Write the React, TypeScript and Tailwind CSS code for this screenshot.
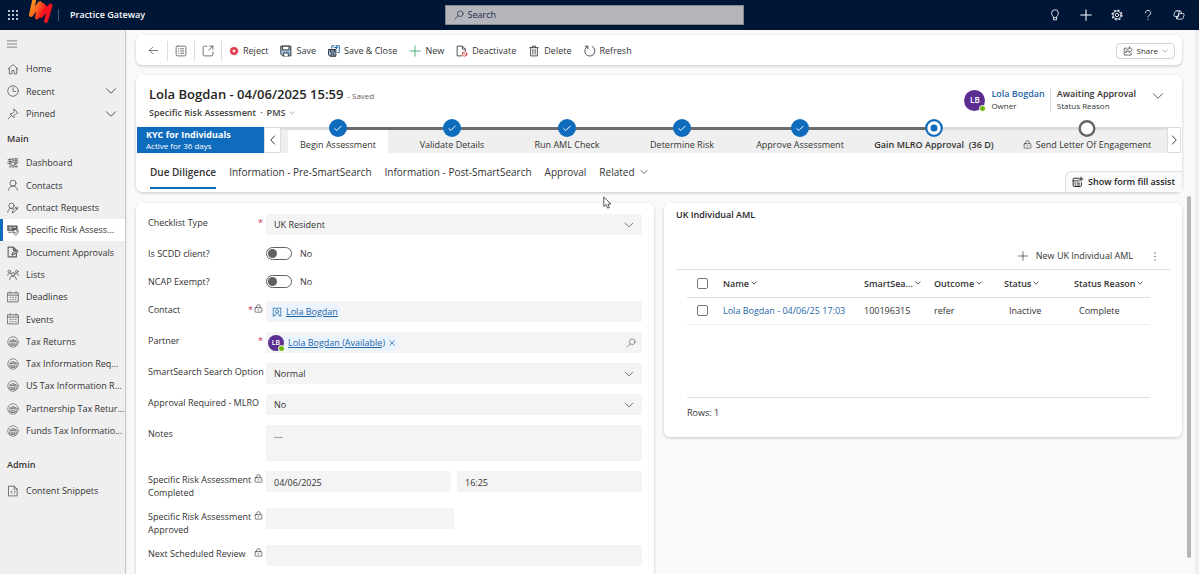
import type { ReactNode } from 'react';
import { clsx } from 'clsx';

type IconProps = { className?: string; children?: ReactNode; sw?: number };

/* 16 unit grid, thin strokes */
function Ico({ className = 'size-3', children, sw = 1.1 }: IconProps) {
  return (
    <svg
      viewBox="0 0 16 16"
      fill="none"
      stroke="currentColor"
      strokeWidth={sw}
      strokeLinecap="round"
      strokeLinejoin="round"
      className={clsx('shrink-0', className)}
      aria-hidden="true"
    >
      {children}
    </svg>
  );
}

const Chevron = ({ className, sw }: { className?: string; sw?: number }) => (
  <Ico className={className} sw={sw}><path d="M2 5l6 6 6-6" /></Ico>
);

const Lock = ({ className = 'size-[10px]' }: { className?: string }) => (
  <Ico className={className}>
    <rect x="2" y="6.5" width="12" height="8" rx="1" />
    <path d="M5 6.5V4a3 3 0 0 1 6 0v2.5M7 10.5h2" />
  </Ico>
);

const PersonRound = () => (
  <Ico sw={0.9}>
    <circle cx="8" cy="8" r="7" />
    <circle cx="8" cy="6" r="1.6" />
    <circle cx="4.8" cy="7" r="1.1" />
    <circle cx="11.2" cy="7" r="1.1" />
    <path d="M5.6 12V9.6h4.8V12zM3.4 11V9.4M12.6 11V9.4M4 12h8" />
  </Ico>
);

const Calendar = () => (
  <Ico>
    <path d="M1 2.5h14v12H1zM1 5.5h14M4 1v1.5M12 1v1.5" />
    <path d="M4 8.5h1M7.5 8.5h1M11 8.5h1M4 11.5h1M7.5 11.5h1M11 11.5h1" />
  </Ico>
);

const topNav = [
  { label: 'Home', icon: <Ico><path d="M1.5 8L8 2l6.5 6M3 7v7.500h3.500V10h3v4.500H13V7" /></Ico> },
  { label: 'Recent', more: true, icon: <Ico><circle cx="8" cy="8" r="7" /><path d="M8 3.500V8.500h3.500" /></Ico> },
  {
    label: 'Pinned',
    more: true,
    icon: <Ico><path d="M9.500 1.500l5 5-1.500.8-1 .2-2.500 2.500-.3 3L4 7.800l3-.3L9.500 5l-.3-1.500zM6 10l-4.500 4.500" /></Ico>,
  },
];

const mainNav = [
  {
    label: 'Dashboard',
    icon: (
      <Ico>
        <circle cx="8" cy="9" r="2.500" />
        <path d="M1.500 3.500h6M1.500 6h4.500M1 8.500h3.500M9 2.500h5.500M9 5h5.500M11.500 7.500h3M3 13h3M10 13h4M4 2v9M12 2v11M8 2v4M8 12v2.500" />
      </Ico>
    ),
  },
  { label: 'Contacts', icon: <Ico><circle cx="8" cy="5.500" r="4" /><path d="M2 15c.3-3.500 2.500-5.500 6-5.500s5.700 2 6 5.500" /></Ico> },
  {
    label: 'Contact Requests',
    icon: (
      <Ico>
        <circle cx="6" cy="5" r="3.500" />
        <path d="M1 13.500c.2-3 2-5 5-5 1 0 2 .3 2.500.7M7 14l1-2.800 5-5 1.800 1.800-5 5zM11.500 7.500l2 2" />
      </Ico>
    ),
  },
  {
    label: 'Specific Risk Assess...',
    active: true,
    icon: (
      <Ico>
        <path d="M.8 2.500h12.700v6H.8z" fill="currentColor" />
        <path d="M3 4.300h2.500M8 4.300h3.500M3 6.500h3" stroke="#fff" />
        <path d="M2 11h5" />
        <path d="M8 8.500c1.500 0 2.200-.4 3.500-1.200 1.300.8 2 1.200 3.500 1.200 0 3.200-1 5-3.500 6.200C9 13.500 8 11.700 8 8.500zM9.800 11l1.200 1.200 2.200-2.200" fill="#fff" />
      </Ico>
    ),
  },
  {
    label: 'Document Approvals',
    icon: (
      <Ico sw={1.4}>
        <path d="M12.500 10v4.500h-11v-13h7l4 4M8.500 1.500v4h4M6.500 12l1-2.800L13 5.500 14.500 7 9 11.500z" />
      </Ico>
    ),
  },
  {
    label: 'Lists',
    icon: (
      <Ico>
        <circle cx="8" cy="7" r="2.300" />
        <circle cx="3" cy="3.500" r="1.700" />
        <circle cx="13" cy="3.500" r="1.700" />
        <path d="M3.500 14c.3-2.800 2-4.500 4.500-4.500s4.200 1.700 4.500 4.500M1 8.500c.2-2 1.500-2.800 3.500-2.500M15 8.500c-.2-2-1.500-2.800-3.500-2.500" />
      </Ico>
    ),
  },
  { label: 'Deadlines', icon: <Calendar /> },
  { label: 'Events', icon: <Calendar /> },
  { label: 'Tax Returns', icon: <PersonRound /> },
  { label: 'Tax Information Req...', icon: <PersonRound /> },
  { label: 'US Tax Information R...', icon: <PersonRound /> },
  { label: 'Partnership Tax Retur...', icon: <PersonRound /> },
  { label: 'Funds Tax Informatio...', icon: <PersonRound /> },
];

const adminNav = [
  {
    label: 'Content Snippets',
    icon: <Ico><path d="M2.500 1.500h7l4 4v9h-11zM9.500 1.500v4h4M6.500 8L5 9.500 6.500 11M9.500 8L11 9.500 9.500 11" /></Ico>,
  },
];

type NavEntry = { label: string; icon: ReactNode; more?: boolean; active?: boolean };

function NavItem({ label, icon, more, active }: NavEntry) {
  return (
    <a
      href="#"
      className={clsx(
        'flex items-center border-l-3 pl-1',
        active ? 'border-[#0f6cbd] bg-white' : 'border-transparent'
      )}
    >
      <span className="text-[#5a5a5a]">{icon}</span>
      <span className="ml-[7px] flex-1 whitespace-nowrap">{label}</span>
      {more && <Chevron className="mr-2 size-3" />}
    </a>
  );
}

function Sidebar() {
  return (
    <nav className="w-[126px] shrink-0 border-r border-[#c8c8c8] bg-[#efefef] text-[9px] text-[#333] shadow-sm">
      <button aria-label="Toggle navigation" className="flex h-7 items-center pl-[7px] text-[#555]">
        <Ico className="size-[10px]"><path d="M0 3h16M0 8h16M0 13h16" /></Ico>
      </button>
      <div className="grid h-[67px] auto-rows-fr grid-cols-1">
        {topNav.map((n) => <NavItem key={n.label} {...n} />)}
      </div>
      <h2 className="flex h-[27px] items-center pl-[7px] font-semibold">Main</h2>
      <div className="grid h-[290px] auto-rows-fr grid-cols-1">
        {mainNav.map((n) => <NavItem key={n.label} {...n} />)}
      </div>
      <h2 className="flex h-[37px] items-center pt-2 pl-[7px] font-semibold">Admin</h2>
      <div className="grid h-[23px] grid-cols-1">
        {adminNav.map((n) => <NavItem key={n.label} {...n} />)}
      </div>
    </nav>
  );
}

function TopBar() {
  return (
    <header className="flex h-[30px] shrink-0 items-center bg-[#001637] text-white">
      <button aria-label="App launcher" className="ml-[7px]">
        <svg viewBox="0 0 12 12" className="size-3" fill="currentColor">
          {[2, 6, 10].map((y) => [2, 6, 10].map((x) => <circle key={`${x}-${y}`} cx={x} cy={y} r="1" />))}
        </svg>
      </button>
      <svg viewBox="0 0 26 30" className="ml-2 h-[30px] w-[26px]" fill="none" strokeWidth="4" strokeLinecap="round" strokeLinejoin="round">
        <defs>
          <linearGradient id="flame" x1="2" y1="4" x2="22" y2="14" gradientUnits="userSpaceOnUse">
            <stop offset="0" stopColor="#ffa51e" />
            <stop offset="0.45" stopColor="#fb5a1e" />
            <stop offset="0.75" stopColor="#f5111f" />
          </linearGradient>
        </defs>
        <path d="M7.500 -1L4 15L13 3L10 17.500L18 7" stroke="url(#flame)" />
        <path d="M16 5L14 16L23.500 5.500L19 21" stroke="url(#flame)" />
      </svg>
      <span className="ml-[5px] h-3 w-px bg-[#44546e]" />
      <span className="ml-[11px] text-[9px] font-semibold">Practice Gateway</span>

      <label className="mx-auto flex h-5 w-[299px] items-center gap-1 border border-[#85878c] bg-[#b4b6bb] pl-2 text-[#1d2c4a]">
        <Ico className="size-[10px]"><circle cx="10" cy="6" r="4.500" /><path d="M6.500 9.500L1.500 14.500" /></Ico>
        <input aria-label="Search" placeholder="Search" className="w-full bg-transparent text-[9px] outline-none placeholder:text-[#1d2c4a]" />
      </label>

      <div className="mr-[14px] flex items-center gap-[19px] pl-[6px]">
        <button aria-label="Tips">
          <Ico><path d="M6 11c0-1.500-2.500-2.500-2.500-5.500a4.500 4.500 0 0 1 9 0C12.500 8.500 10 9.500 10 11zM6 11v3.500h4V11" /></Ico>
        </button>
        <button aria-label="Add"><Ico sw={1.4}><path d="M8 1v14M1 8h14" /></Ico></button>
        <button aria-label="Settings">
          <Ico>
            <circle cx="8" cy="8" r="2.300" />
            <circle cx="8" cy="8" r="5.200" />
            <circle cx="8" cy="8" r="6.600" strokeWidth="1.600" strokeDasharray="2.600 2.580" strokeLinecap="butt" />
          </Ico>
        </button>
        <button aria-label="Help">
          <Ico><path d="M4.500 5a3.500 3.500 0 1 1 5.500 3C8.500 9 8 9.500 8 11M8 14v.3" /></Ico>
        </button>
        <button aria-label="Copilot">
          <Ico>
            <path d="M5.500 2.500h4c1 0 1.300.7 1.600 1.800l.4 1.700h1.500c2 0 2 1.500 1.500 3l-.8 2.500c-.4 1.300-1 2-2.200 2h-5c-1 0-1.400-.7-1.600-1.500L4.500 10H3C1 10 1 8.500 1.500 7l.8-2.500c.5-1.300 1.200-2 3.200-2z" />
            <path d="M8.500 3L6 11.500c-.3 1-.8 1.500-1.500 1.500M11.500 6H9.500c-1 0-1.300.5-1.600 1.500L7 10H4.500" />
          </Ico>
        </button>
      </div>
    </header>
  );
}

const Floppy = () => (
  <Ico sw={1.3}>
    <path d="M1.500 1.500h13v13h-11l-2-2z" fill="#9cc3e6" />
    <path d="M4 1.500h8v5H4zM5 14.500v-4h6v4" fill="#fff" />
  </Ico>
);

const commands = [
  {
    label: 'Reject',
    icon: (
      <Ico className="size-[10px]">
        <circle cx="8" cy="8" r="6" fill="#e03a48" stroke="#e03a48" />
        <path d="M6.500 6.500l3 3M9.500 6.500l-3 3" stroke="#fff" strokeWidth="1.800" />
      </Ico>
    ),
  },
  { label: 'Save', icon: <Floppy /> },
  {
    label: 'Save & Close',
    icon: (
      <Ico sw={1.3}>
        <path d="M1 6h9.500v9H2.500L1 13.500z" fill="#9cc3e6" />
        <path d="M3.500 6.500h5v3h-5zM4 15v-3h4v3" />
        <path d="M5 4V1h3M11 1h4v9h-2M8 3.500h4.500M10.500 1.500l2 2-2 2" stroke="#22639c" />
      </Ico>
    ),
  },
  { label: 'New', icon: <Ico><path d="M8 1v14M1 8h14" stroke="#33a457" /></Ico> },
  {
    label: 'Deactivate',
    icon: (
      <Ico>
        <path d="M7.500 14.500h-6v-13h7l4 4v2M8.500 1.500v4h4" />
        <circle cx="11.500" cy="12" r="3" stroke="#d13438" />
        <path d="M9.500 10l4 4" stroke="#d13438" />
      </Ico>
    ),
  },
  {
    label: 'Delete',
    icon: <Ico><path d="M2.500 3.500h11M6 3.500v-2h4v2M3.500 3.500v11h9v-11M6.500 6v6M9.500 6v6" /></Ico>,
  },
  {
    label: 'Refresh',
    icon: <Ico><path d="M5 1.700A6.800 6.800 0 1 0 11 1.900M1.800 1.500H5.200V5" /></Ico>,
  },
];

function CommandBar() {
  return (
    <div className="flex h-[30px] items-center rounded-md bg-white pt-px pr-[7px] pl-3 text-[9px] text-[#333] shadow-[0_1px_3px_rgba(0,0,0,0.2)]">
      <div className="mr-[7px] flex h-5 items-center divide-x divide-[#ddd] border-r border-[#ddd] text-[#555] *:flex *:h-5 *:items-center">
        <button aria-label="Back" className="pr-2">
          <Ico className="size-[11px]"><path d="M14 8H2M7 3L2 8l5 5" /></Ico>
        </button>
        <button aria-label="Form selector" className="px-[7px]">
          <Ico>
            <rect x="1.500" y="1.500" width="13" height="13" rx="2" />
            <path d="M4.500 5h.5M7.500 5h4M4.500 8h.5M7.500 8h4M4.500 11h.5M7.500 11h4" />
          </Ico>
        </button>
        <button aria-label="Open in new window" className="px-[7px]">
          <Ico><path d="M6.500 1.500h-3a2 2 0 0 0-2 2v9a2 2 0 0 0 2 2h9a2 2 0 0 0 2-2v-3M10 1.500h4.500V6M14.500 1.500L9 7" /></Ico>
        </button>
      </div>
      <div className="flex items-center gap-3">
        {commands.map((c) => (
          <button key={c.label} className="flex items-center gap-1 whitespace-nowrap">
            {c.icon}
            {c.label}
          </button>
        ))}
      </div>
      <button className="ml-auto flex h-4 items-center gap-1 rounded-sm border border-[#d1d1d1] px-[6px] text-[8px]">
        <Ico className="size-[10px]">
          <path d="M6 3.500H2v11h11V11M10 1.500l5 4.500-5 4.500V8C7.500 8 6 9 4.500 11 5 7 7 4.200 10 4z" />
        </Ico>
        Share
        <Chevron className="size-[6px]" />
      </button>
    </div>
  );
}

const stages = [
  { label: 'Begin Assessment', state: 'done' },
  { label: 'Validate Details', state: 'done' },
  { label: 'Run AML Check', state: 'done' },
  { label: 'Determine Risk', state: 'done' },
  { label: 'Approve Assessment', state: 'done' },
  { label: 'Gain MLRO Approval  (36 D)', state: 'current' },
  { label: 'Send Letter Of Engagement', state: 'todo' },
];

function Stage({ label, state, first }: { label: string; state: string; first: boolean }) {
  return (
    <li className="relative h-[26px]">
      <div className="flex h-[3px]">
        <span className={clsx('flex-1', first || state === 'todo' ? 'bg-[#dcdcdc]' : 'bg-[#6b6b6b]')} />
        <span className={clsx('flex-1', state === 'done' ? 'bg-[#6b6b6b]' : 'bg-[#dcdcdc]')} />
      </div>
      <button
        className={clsx(
          'flex h-[23px] items-end justify-center gap-1 pb-[2px] whitespace-pre',
          first ? 'mx-[7px] w-[calc(100%-14px)] bg-white' : 'w-full',
          state === 'current' && 'font-semibold'
        )}
      >
        {state === 'todo' && <Lock className="mb-[2px] size-[9px]" />}
        {label}
      </button>
      <svg viewBox="0 0 18 18" className="absolute -top-2 left-1/2 size-[18px] -translate-x-1/2" fill="none">
        {state === 'done' && (
          <>
            <circle cx="9" cy="9" r="9" fill="#0f6cbd" />
            <path d="M5.500 9.300l2.300 2.200 4.700-4.700" stroke="#fff" />
          </>
        )}
        {state === 'current' && (
          <>
            <circle cx="9" cy="9" r="7.800" fill="#fff" stroke="#0f6cbd" strokeWidth="2.200" />
            <circle cx="9" cy="9" r="3.500" fill="#0f6cbd" />
          </>
        )}
        {state === 'todo' && <circle cx="9" cy="9.500" r="7.300" fill="#fff" stroke="#666" strokeWidth="2.400" />}
      </svg>
    </li>
  );
}

function ProcessBar() {
  return (
    <div className="mx-px flex h-[26px] text-[9px] text-[#333]">
      <div className="w-[127px] bg-[#0f6cbd] pl-[9px] text-white">
        <p className="pt-px text-[9px] leading-[13px] font-bold">KYC for Individuals</p>
        <p className="text-[8px] leading-[10px]">Active for 36 days</p>
      </div>
      <button aria-label="Previous stage" className="flex w-[17px] items-center justify-center border border-[#ddd] bg-white">
        <Ico className="size-[10px]" sw={1.5}><path d="M10.500 1.500L4.500 8l6 6.500" /></Ico>
      </button>
      <ol className="grid flex-1 grid-cols-[114fr_114fr_116fr_114fr_122fr_146fr_160fr] bg-[#efefef]">
        {stages.map((s, i) => <Stage key={s.label} {...s} first={i === 0} />)}
      </ol>
      <button aria-label="Next stage" className="flex w-[14px] items-center justify-center border border-[#ddd] bg-white">
        <Ico className="size-[10px]" sw={1.5}><path d="M5.500 1.500l6 6.500-6 6.500" /></Ico>
      </button>
    </div>
  );
}

function Persona({ small }: { small?: boolean }) {
  return (
    <span
      className={clsx(
        'relative flex shrink-0 items-center justify-center rounded-full bg-[#5c2e91] font-semibold text-white',
        small ? 'size-4 text-[7px]' : 'size-[21px] text-[8px]'
      )}
    >
      LB
      <span className="absolute -right-px -bottom-px size-[7px] rounded-full border border-white bg-[#6bb700]" />
    </span>
  );
}

const tabs = ['Due Diligence', 'Information - Pre-SmartSearch', 'Information - Post-SmartSearch', 'Approval', 'Related'];

function RecordHeader() {
  return (
    <section className="mt-[10px] rounded-md bg-white shadow-[0_1px_3px_rgba(0,0,0,0.2)]">
      <div className="flex h-[52px] items-start pr-[18px] pl-[13px]">
        <div className="pt-[10px]">
          <h1 className="text-[13px] leading-[18px] font-semibold text-[#242424]">
            Lola Bogdan - 04/06/2025 15:59
            <span className="ml-1 text-[8px] font-normal text-[#616161]">- Saved</span>
          </h1>
          <div className="flex items-center gap-1 text-[9px] leading-4 font-semibold text-[#424242]">
            <span>Specific Risk Assessment</span>
            <span>·</span>
            <button className="flex items-center gap-1">
              PMS
              <Chevron className="size-[6px]" />
            </button>
          </div>
        </div>
        <div className="ml-auto flex items-center pt-[13px]">
          <Persona />
          <div className="ml-[6px] text-[8px] leading-3">
            <a href="#" className="block text-[9px] font-semibold text-[#1f66a8]">Lola Bogdan</a>
            Owner
          </div>
          <div className="ml-[5px] border-l border-[#ddd] pl-[6px] text-[8px] leading-3 text-[#333]">
            <p className="text-[9px] font-semibold">Awaiting Approval</p>
            Status Reason
          </div>
          <button aria-label="More header fields" className="ml-4 pb-2">
            <Chevron className="size-3" />
          </button>
        </div>
      </div>
      <ProcessBar />
      <div className="flex h-[39px] items-start pl-[14px]">
        <div role="tablist" className="flex gap-[13px] pt-[10px] text-[10px] leading-[18px] text-[#333]">
          {tabs.map((t, i) => (
            <button
              key={t}
              role="tab"
              aria-selected={i === 0}
              className={clsx(
                'flex h-[26px] items-start whitespace-nowrap',
                i === 0 && 'border-b-2 border-[#0f6cbd] font-semibold'
              )}
            >
              {t}
              {t === 'Related' && <Chevron className="mt-[5px] ml-[5px] size-2" sw={1.5} />}
            </button>
          ))}
        </div>
        <button className="ml-auto flex h-[21px] items-center gap-1 self-end rounded-tl-md border-t border-l border-[#e0e0e0] bg-[#fafafa] pr-[7px] pl-[6px] text-[9px] font-semibold whitespace-nowrap text-[#242424]">
          <Ico sw={1.3}>
            <path d="M9 3H3a1.500 1.500 0 0 0-1.500 1.500v8A1.500 1.500 0 0 0 3 14h8a1.500 1.500 0 0 0 1.500-1.500V9M1.500 6.500h8M4 9.500h1M7 9.500h3M4 12h1M7 12h3M12 1.500v5M9.500 4h5" />
          </Ico>
          Show form fill assist
        </button>
      </div>
    </section>
  );
}

const field = 'w-full rounded-[2px] bg-[#f4f4f4] px-2 outline-none';

type RowProps = { label: string; id: string; required?: boolean; locked?: boolean; height?: string; children: ReactNode };

function Row({ label, id, required, locked, height = 'min-h-[21px]', children }: RowProps) {
  return (
    <div className={clsx('flex items-start', height)}>
      <div className={clsx('flex w-[118px] shrink-0 items-start pt-[2px] leading-[13px]', (required || locked) && 'pr-[3px]')}>
        <label htmlFor={id} className="flex-1">{label}</label>
        {required && <span className="text-[#c4314b]">*</span>}
        {locked && <Lock className="mt-px ml-px size-[9px]" />}
      </div>
      <div className="min-w-0 flex-1">{children}</div>
    </div>
  );
}

function Select({ id, value }: { id: string; value: string }) {
  return (
    <div className="relative">
      <select id={id} className={clsx(field, 'h-[21px] appearance-none pt-px')} defaultValue={value}>
        <option>{value}</option>
      </select>
      <Chevron className="pointer-events-none absolute top-[6px] right-2 size-[10px] text-[#616161]" sw={1.4} />
    </div>
  );
}

function Toggle({ id }: { id: string }) {
  return (
    <div className="flex items-center gap-2 pt-[2px]">
      <span className="relative flex">
        <input id={id} type="checkbox" role="switch" className="peer h-[13px] w-[26px] appearance-none rounded-full border border-[#616161] bg-white" />
        <span className="pointer-events-none absolute top-[2px] left-[2px] size-[9px] rounded-full bg-[#616161] peer-checked:left-[15px]" />
      </span>
      No
    </div>
  );
}

function DetailsForm() {
  return (
    <form className="flex flex-col gap-[10px] rounded-md bg-white px-3 pt-[11px] pb-10 text-[9px] text-[#333] shadow-[0_1px_3px_rgba(0,0,0,0.2)]">
      <Row id="checklist" label="Checklist Type" required>
        <Select id="checklist" value="UK Resident" />
      </Row>
      <Row id="scdd" label="Is SCDD client?" height="h-[18px]"><Toggle id="scdd" /></Row>
      <Row id="ncap" label="NCAP Exempt?" height="h-[18px]"><Toggle id="ncap" /></Row>
      <Row id="contact" label="Contact" required locked>
        <div className="flex h-[21px] items-center rounded-[2px] bg-[#f4f4f4] pl-1">
          <a id="contact" href="#" className="flex items-center gap-1 rounded-sm bg-[#ebf3fc] px-[2px] leading-4 text-[#1f66a8] underline">
            <Ico className="size-[10px]">
              <path d="M2 2h12M2 2v12M14 2v12M2 14h2M12 14h2" />
              <circle cx="8" cy="7" r="2.500" />
              <path d="M4.500 14c.3-2.500 1.500-4 3.500-4s3.200 1.500 3.500 4" />
            </Ico>
            Lola Bogdan
          </a>
        </div>
      </Row>
      <Row id="partner" label="Partner" required>
        <div className="flex h-[21px] items-center rounded-[2px] bg-[#f4f4f4] pr-[6px] pl-[2px]">
          <span className="flex items-center rounded-full bg-[#ebf3fc] pr-1 leading-4 text-[#1f66a8]">
            <Persona small />
            <a id="partner" href="#" className="ml-1 underline">Lola Bogdan (Available)</a>
            <button type="button" aria-label="Remove partner" className="ml-1">
              <Ico className="size-[6px]" sw={2}><path d="M2 2l12 12M14 2L2 14" /></Ico>
            </button>
          </span>
          <button type="button" aria-label="Search partner" className="ml-auto text-[#616161]">
            <Ico className="size-[10px]"><circle cx="10" cy="6" r="4.500" /><path d="M6.500 9.500L1.500 14.500" /></Ico>
          </button>
        </div>
      </Row>
      <Row id="option" label="SmartSearch Search Option"><Select id="option" value="Normal" /></Row>
      <Row id="mlro" label="Approval Required - MLRO"><Select id="mlro" value="No" /></Row>
      <Row id="notes" label="Notes">
        <textarea id="notes" defaultValue="---" className={clsx(field, 'block h-9 resize-none pt-[5px] text-[#616161]')} />
      </Row>
      <Row id="completed" label="Specific Risk Assessment Completed" locked height="h-[27px]">
        <div className="flex gap-[6px]">
          <input id="completed" readOnly value="04/06/2025" className={clsx(field, 'h-[21px] pt-px')} />
          <input aria-label="Completed time" readOnly value="16:25" className={clsx(field, 'h-[21px] pt-px')} />
        </div>
      </Row>
      <Row id="approved" label="Specific Risk Assessment Approved" locked height="h-[27px]">
        <input id="approved" readOnly className={clsx(field, 'h-[21px] max-w-1/2')} />
      </Row>
      <Row id="review" label="Next Scheduled Review" locked>
        <input id="review" readOnly className={clsx(field, 'h-[21px]')} />
      </Row>
    </form>
  );
}

const columns = ['Name', 'SmartSea...', 'Outcome', 'Status', 'Status Reason'];

const Check = ({ label }: { label: string }) => (
  <input type="checkbox" aria-label={label} className="mx-auto block size-[11px] appearance-none rounded-[2px] border border-[#757575] bg-white" />
);

function AmlCard() {
  return (
    <section className="rounded-md bg-white px-3 pt-[5px] pb-[18px] text-[9px] text-[#333] shadow-[0_1px_3px_rgba(0,0,0,0.2)]">
      <h2 className="leading-[14px] font-semibold text-[#242424]">UK Individual AML</h2>
      <div className="mt-5 flex h-7 items-center justify-end border-b border-[#ddd] pr-[10px]">
        <button className="flex items-center gap-2">
          <Ico className="size-[10px]"><path d="M8 1v14M1 8h14" /></Ico>
          New UK Individual AML
        </button>
        <button aria-label="More commands" className="ml-[17px]">
          <Ico className="size-[10px]" sw={2}><path d="M8 3v.1M8 8.500v.1M8 14v.1" /></Ico>
        </button>
      </div>
      <div className="mr-5 ml-[11px] h-[128px] border-b border-[#ddd]">
        <table className="w-full table-fixed text-left">
          <colgroup>
            <col className="w-[30px]" />
            <col />
            <col className="w-[70px]" />
            <col className="w-[70px]" />
            <col className="w-[70px]" />
            <col className="w-[82px]" />
          </colgroup>
          <thead>
            <tr className="h-[27px] border-b border-[#ddd] *:p-0">
              <th><Check label="Select all rows" /></th>
              {columns.map((c) => (
                <th key={c} className="font-semibold whitespace-nowrap">
                  <span className="flex items-center gap-[2px] pl-[6px]">
                    {c}
                    <Chevron className="size-[6px]" sw={2.2} />
                  </span>
                </th>
              ))}
            </tr>
          </thead>
          <tbody>
            <tr className="h-[27px] border-b border-[#eee] *:p-0">
              <td><Check label="Select row" /></td>
              <td className="whitespace-nowrap"><a href="#" className="pl-[6px] text-[#1f66a8]">Lola Bogdan - 04/06/25 17:03</a></td>
              <td><span className="pl-[6px]">100196315</span></td>
              <td><span className="pl-[6px]">refer</span></td>
              <td><span className="pl-[11px]">Inactive</span></td>
              <td><span className="pl-[11px]">Complete</span></td>
            </tr>
          </tbody>
        </table>
      </div>
      <p className="pt-2 pl-[11px] leading-[13px]">Rows: 1</p>
    </section>
  );
}

export default function App() {
  return (
    <div className="flex h-screen flex-col overflow-hidden bg-[#f9f9f9] font-['Open_Sans','Noto_Sans',sans-serif] text-[#333]">
      <TopBar />
      <div className="flex min-h-0 flex-1">
        <Sidebar />
        <main className="flex min-w-0 flex-1 flex-col pt-[5px] pl-[10px]">
          <div className="pr-[13px]">
            <CommandBar />
            <RecordHeader />
          </div>
          <div className="flex min-h-0 flex-1 pt-1">
            <div className="grid flex-1 grid-cols-2 items-start gap-[10px] pt-[7px]">
              <DetailsForm />
              <AmlCard />
            </div>
            <div className="mr-1 mb-4 ml-[5px] w-1 rounded-full bg-[#b5b5b5]" />
          </div>
        </main>
        <div className="w-1 shrink-0 bg-[#efefef]" />
      </div>

      {/* mouse pointer */}
      <svg viewBox="0 0 9 13" className="absolute top-[196px] left-[603px] h-[13px] w-[9px]" fill="#fff" stroke="#444" strokeWidth="0.9">
        <path d="M.8 1v9.500l2.300-2 1.600 3.700 1.700-.8L4.900 8h3z" />
      </svg>
    </div>
  );
}
